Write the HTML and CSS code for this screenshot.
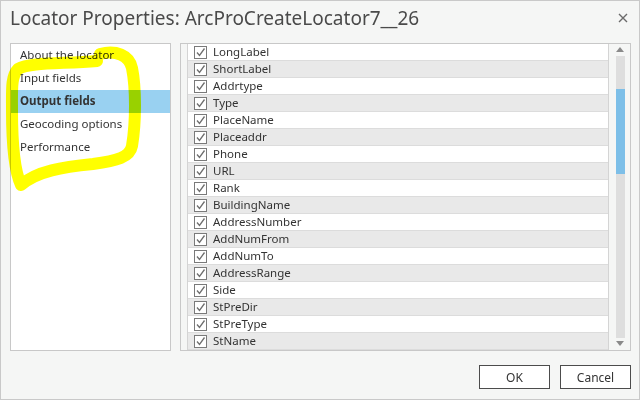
FILE: index.html
```html
<!DOCTYPE html>
<html lang="en">
<head>
  <meta charset="UTF-8">
  <title>Locator Properties</title>
  <link rel="stylesheet" href="styles.css">
</head>
<body>
  <div class="dialog">
    <div class="titlebar">
      <span class="title">Locator Properties: ArcProCreateLocator7__26</span>
      <span class="close">
        <svg width="10" height="10" viewBox="0 0 10 10"><path d="M1 1 L9 9 M9 1 L1 9" stroke="#6b6b6b" stroke-width="1.4" fill="none"/></svg>
      </span>
    </div>

    <div class="content">
      <div class="nav">
        <div class="nav-item">About the locator</div>
        <div class="nav-item">Input fields</div>
        <div class="nav-item active">Output fields</div>
        <div class="nav-item">Geocoding options</div>
        <div class="nav-item">Performance</div>
        <!-- marker scribble drawn over the page list -->
        <svg class="marker" width="160" height="200" viewBox="0 0 160 200">
          <path d="M100 54 C116 50 129 55 132 68 C136 88 136 122 132 146 C130 157 117 161 93 164 C63 167 37 171 21 185 C14 170 12 140 12 110 C12 90 11 76 18 69 C30 62 62 64 97 61"
                stroke="#ffff00" stroke-width="12" fill="none" stroke-linecap="round" stroke-linejoin="round"/>
        </svg>
      </div>

      <div class="fields">
        <div class="field-list" id="fieldList"></div>
        <div class="scrollbar">
          <div class="arrow up"></div>
          <div class="track"><div class="thumb"></div></div>
          <div class="arrow down"></div>
        </div>
      </div>
    </div>

    <div class="footer">
      <button class="btn">OK</button>
      <button class="btn">Cancel</button>
    </div>
  </div>

<script>
  const fields = ["LongLabel", "ShortLabel", "Addrtype", "Type", "PlaceName", "Placeaddr",
    "Phone", "URL", "Rank", "BuildingName", "AddressNumber", "AddNumFrom", "AddNumTo",
    "AddressRange", "Side", "StPreDir", "StPreType", "StName"];

  const list = document.getElementById("fieldList");
  const check = '<svg width="11" height="11" viewBox="0 0 11 11"><path d="M2 5.5 L4.5 8.5 L9.5 1.5" stroke="#6e6e6e" stroke-width="1.3" fill="none"/></svg>';

  fields.forEach((name, i) => {
    const row = document.createElement("div");
    row.className = "field-row" + (i % 2 ? " alt" : "");
    row.innerHTML = '<span class="checkbox">' + check + '</span><span class="field-name">' + name + '</span>';
    list.appendChild(row);
  });
</script>
</body>
</html>
```

FILE: styles.css
```css
body {
  margin: 0;
  font-family: "Noto Sans", "Open Sans", sans-serif;
  color: #333;
}
.dialog {
  width: 640px;
  height: 400px;
  box-sizing: border-box;
  border: 1px solid #c9c9c9;
  background-color: #f5f6f5;
  display: flex;
  flex-direction: column;
}
.titlebar {
  height: 42px;
  display: flex;
  align-items: center;
  justify-content: space-between;
  padding: 0 11px 0 9px;
}
.title {
  font-size: 19px;
  color: #4a4a4a;
  margin-top: -9px;
}
.close {
  display: flex;
  margin-top: -9px;
}
.content {
  display: flex;
  height: 308px;
  padding: 0 8px 0 9px;
  gap: 9px;
}
.nav {
  width: 161px;
  box-sizing: border-box;
  border: 1px solid #c8c8c8;
  background-color: white;
  position: relative;
}
.nav-item {
  height: 23px;
  line-height: 22px;
  padding-left: 9px;
  font-size: 11.5px;
}
.nav-item.active {
  background-color: #99d1f1;
  font-weight: bold;
}
.marker {
  position: absolute;
  left: -11px;
  top: -44px;
  pointer-events: none;
  overflow: visible;
  mix-blend-mode: multiply;
}
.fields {
  flex: 1;
  display: flex;
  border: 1px solid #c8c8c8;
  padding-left: 6px;
  background-color: #f5f6f5;
}
.field-list {
  flex: 1;
  border-left: 1px solid #d4d4d4;
  border-right: 1px solid #d4d4d4;
  overflow: hidden;
}
.field-row {
  height: 16px;
  border-bottom: 1px solid #dcdcdc;
  background-color: white;
  display: flex;
  align-items: center;
  font-size: 11.5px;
}
.field-row.alt {
  background-color: #e9e9e9;
}
.field-name {
  padding-bottom: 1px;
}
.checkbox {
  width: 11px;
  height: 11px;
  border: 1px solid #7a7a7a;
  background-color: white;
  margin-left: 6px;
  margin-right: 6px;
  display: flex;
}
.scrollbar {
  width: 20px;
  display: flex;
  flex-direction: column;
  align-items: center;
  padding-left: 1px;
}
.arrow {
  width: 0;
  height: 0;
  border-left: 4px solid transparent;
  border-right: 4px solid transparent;
}
.arrow.up {
  border-bottom: 5px solid #8a8a8a;
  margin: 3px 0 4px;
}
.arrow.down {
  border-top: 5px solid #8a8a8a;
  margin: 3px 0 4px;
}
.track {
  width: 9px;
  flex: 1;
  background-color: #dedede;
  padding-top: 33px;
}
.thumb {
  height: 85px;
  background-color: #7dbfe8;
}
.footer {
  display: flex;
  justify-content: flex-end;
  gap: 10px;
  padding: 14px 8px 0 0;
}
.btn {
  width: 71px;
  height: 24px;
  background-color: white;
  border: 1px solid #4c4c4c;
  font-family: "Noto Sans", "Open Sans", sans-serif;
  font-size: 12px;
  color: #333;
  padding: 0;
}
```
